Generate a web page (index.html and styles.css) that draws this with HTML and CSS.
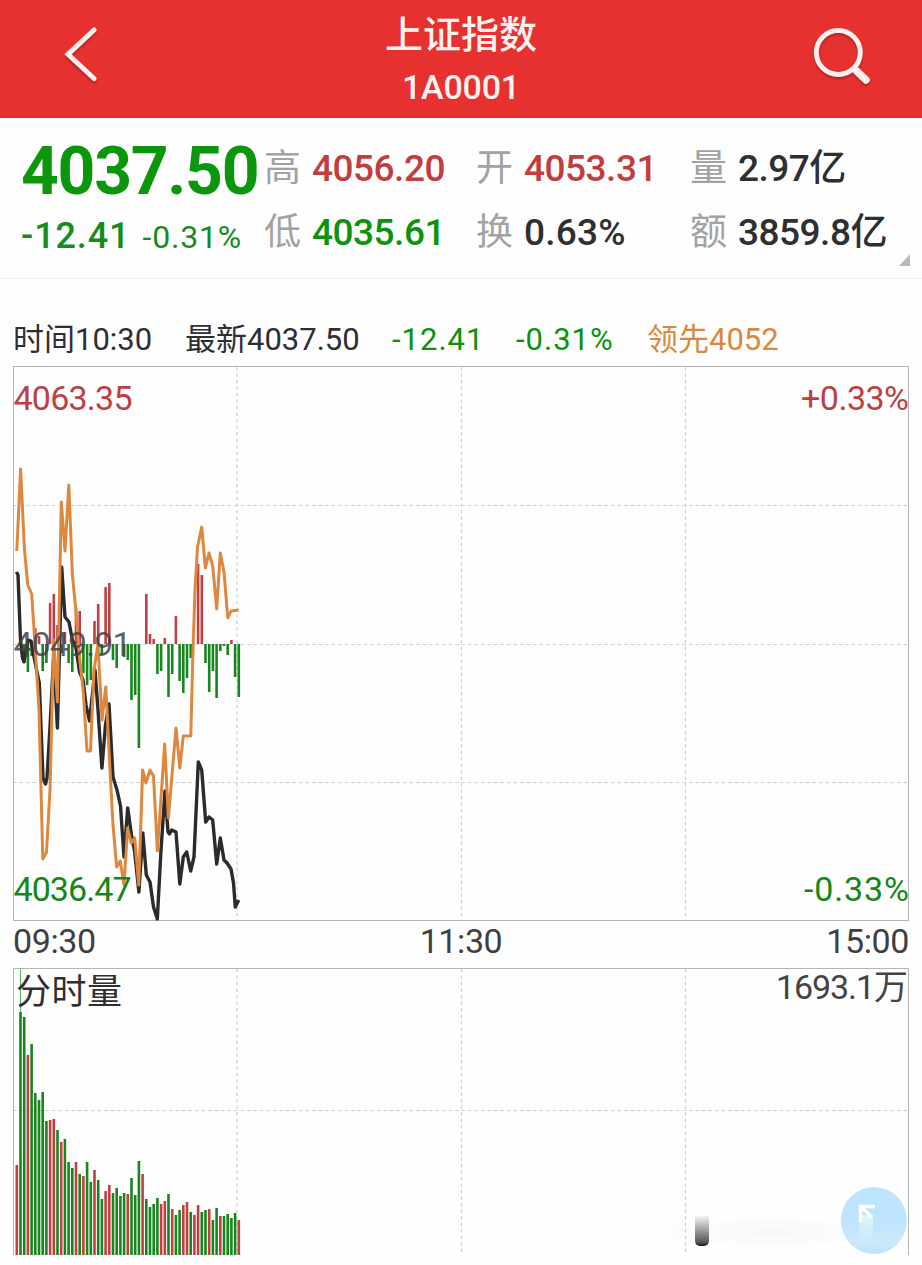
FILE: index.html
```html
<!DOCTYPE html>
<html lang="zh-CN">
<head>
    <meta charset="UTF-8">
    <meta name="viewport" content="width=device-width, initial-scale=1.0">
    <title>上证指数 1A0001</title>
    <link rel="stylesheet" href="styles.css">
</head>
<body>
    <header>
        <svg class="back" viewBox="0 0 40 60" width="40" height="60">
            <path d="M37 5 L11 29.300 L37 53.500"/>
        </svg>
        <div class="title">
            <h1>上证指数</h1>
            <p>1A0001</p>
        </div>
        <svg class="search" viewBox="0 0 64 64" width="64" height="64">
            <circle cx="28.300" cy="26.500" r="22"/>
            <path class="handle" d="M46.500 45 L56 54"/>
        </svg>
    </header>

    <section class="quote">
        <div class="price">
            <div class="last">4037.50</div>
            <div class="change"><b>-12.41</b><span>-0.31%</span></div>
        </div>
        <dl class="stats">
            <div><dt>高</dt><dd class="up">4056.20</dd></div>
            <div><dt>开</dt><dd class="up">4053.31</dd></div>
            <div><dt>量</dt><dd>2.97亿</dd></div>
            <div><dt>低</dt><dd class="down">4035.61</dd></div>
            <div><dt>换</dt><dd class="turnover">0.63%</dd></div>
            <div><dt>额</dt><dd>3859.8亿</dd></div>
        </dl>
        <i class="more"></i>
    </section>

    <div class="info">
        <span>时间10:30</span>
        <span>最新4037.50</span>
        <span class="down diff">-12.41</span>
        <span class="down diff">-0.31%</span>
        <span class="lead">领先4052</span>
    </div>

    <svg class="chart" viewBox="13 366 896 556" width="896" height="556">
        <path class="grid" d="M13 505.5H908 M13 644.5H908 M13 782.5H908 M237 367V921 M461.5 367V921 M685.5 367V921"/>
        <rect class="frame" x="13.5" y="366.5" width="895" height="554"/>
        <g id="strength"></g>
        <polyline class="index-line" points="16.5,572 18,575 20.5,640 22.5,658 24,662 28,640 31,641 35,662 39.3,683 43,778 45.5,784 47,778 50,727 53.7,655 57.4,728 61.7,567 65,617 69,622 72.4,640 76,648 79.5,672 83,680 86,705 89.5,721 95,670 98,710 101.9,768 105.5,725 109,704 113,777 117,790 120.5,806 124,857 127.7,808 131.5,835 134.7,852 138.9,892 142.8,833 146.3,875 150,882 153.5,907 157.3,919 161,850 165,791 168,832 169.5,834 171.7,830 176,832 179.8,884 183.3,857 186.7,852 190.7,871 194,857 198.3,762 201.7,770 205.7,822 209,817 212.7,820 216.7,864 220.3,838 224,860 227,863 231,869 233.5,883 235.3,907 238.7,900"/>
        <polyline class="lead-line" points="16.8,551 20.6,469 24.5,550 27.8,585 31.7,594 35.3,650 39,710 42.8,859 46.5,852 50,790 53.7,640 57.4,702 61.3,502 65,551 68.8,485 72.4,575 76,612 79.8,660 83.3,692 87,751 90.5,751 94,670 98,644 102,720 105.8,687 109.5,760 113,825 116.7,867 120.3,861 124,885 127.6,828 131.3,843 134.7,838 138.8,885 142.6,770 146,783 150,770 153.5,776 157.4,851 161.2,795 164.7,744 168.4,818 172,775 176,728 179.8,768 183.3,736 190.8,736 192.7,660 195,590 197.5,547 201.7,527 205.4,568 209,553 212.7,566 216.7,609 220.3,553 224,572 227.8,618 231,611 238.7,610"/>
        <text class="up" x="13.500" y="410" textLength="119">4063.35</text>
        <text class="middle" x="13.500" y="656" textLength="118">4049.91</text>
        <text class="down" x="13.500" y="901" textLength="118">4036.47</text>
        <text class="up" x="801" y="410" textLength="108">+0.33%</text>
        <text class="down" x="804" y="901" textLength="105">-0.33%</text>
    </svg>

    <div class="times">
        <span>09:30</span>
        <span>11:30</span>
        <span>15:00</span>
    </div>

    <svg class="chart" viewBox="13 968 896 287" width="896" height="287">
        <path class="grid" d="M13 1110.5H908 M237 969V1255 M461.5 969V1255 M685.5 969V1255"/>
        <path class="frame" d="M13.5 1255V968.5H908.5V1255"/>
        <path class="peak" d="M20.5 969V1012"/>
        <g id="volume"></g>
        <text class="name" x="16" y="1004" textLength="106">分时量</text>
        <text x="776" y="999" textLength="132">1693.1万</text>
    </svg>

    <div class="smear"></div>
    <div class="knob"></div>
    <div class="float-btn">
        <svg viewBox="0 0 66 66" width="66" height="66">
            <defs>
                <linearGradient id="fade" x1="0" y1="18" x2="0" y2="56" gradientUnits="userSpaceOnUse">
                    <stop offset="0.3" stop-color="#dff6f2"/>
                    <stop offset="1" stop-color="#dff6f2" stop-opacity="0"/>
                </linearGradient>
            </defs>
            <rect x="18" y="28" width="14" height="28" fill="url(#fade)"/>
            <path class="head" d="M19.500 35V19.500H34M20 20L31 30"/>
        </svg>
    </div>

    <script>
        // one entry per minute, u = red, d = green
        const volume = 'u1165 d1012 d1017 u1055 d1044 d1093 d1100 d1092 d1121 u1120 u1119 d1130 u1142 d1139 d1162 d1168 u1162 d1174 u1176 d1162 d1182 u1170 d1180 d1199 u1191 u1185 d1193 d1188 d1196 d1193 u1194 d1178 d1195 d1161 u1174 d1199 d1207 d1204 d1198 u1204 u1201 d1194 u1209 d1215 d1210 u1205 u1202 d1212 u1215 u1205 d1212 d1210 u1209 d1220 d1208 u1216 d1216 d1214 d1218 d1213 u1220';
        // end of each bar measured from the middle line
        const strength = [0, 0, 663, 672, 656, 628, 636, 671, 663, 603, 594, 625, 653, 632, 663, 672, 608, 611, 673, 685, 680, 621, 604, 655, 587, 583, 660, 668, 0, 657, 660, 700, 695, 748, 0, 594, 634, 639, 674, 671, 638, 697, 674, 616, 681, 693, 678, 658, 0, 564, 575, 663, 692, 671, 698, 651, 646, 655, 640, 677, 697];

        function bar(group, i, from, to, cls) {
            const r = document.createElementNS('http://www.w3.org/2000/svg', 'rect');
            r.setAttribute('x', (15.5 + 3.7 * i).toFixed(1));
            r.setAttribute('y', Math.min(from, to));
            r.setAttribute('width', 2.6);
            r.setAttribute('height', Math.abs(from - to));
            r.setAttribute('class', cls);
            document.getElementById(group).appendChild(r);
        }

        volume.split(' ').forEach((v, i) => bar('volume', i, 1255, +v.slice(1), v[0] === 'u' ? 'bar-up' : 'bar-down'));
        strength.forEach((y, i) => {
            if (y) bar('strength', i, 644, y, y < 644 ? 'bar-up' : 'bar-down');
        });
    </script>
</body>
</html>
```
FILE: styles.css
```css
* {
    box-sizing: border-box;
}
body {
    margin: 0;
    position: relative;
    width: 922px;
    height: 1265px;
    overflow: hidden;
    font-family: Roboto, "Noto Sans CJK SC", sans-serif;
    background-color: #fefefe;
    color: #2e2f31;
}
.up {
    color: #c23d3d;
    fill: #c23d3d;
}
.down {
    color: #0b930b;
    fill: #0b930b;
}
header {
    height: 118px;
    padding: 0 48px 0 57px;
    display: flex;
    justify-content: space-between;
    background-color: #e73030;
    border-bottom: 1px solid #d33035;
    color: #fff3f0;
}
header svg {
    fill: none;
    stroke: #fff0ee;
    stroke-width: 5;
    stroke-linecap: round;
    filter: drop-shadow(0 2px 1px rgba(100, 20, 20, 0.45));
}
.back {
    margin-top: 25px;
}
.search {
    margin-top: 26px;
}
.search .handle {
    stroke-width: 7.5;
}
.title {
    margin-left: 15px;
    text-align: center;
}
.title h1 {
    margin: 13px 0 0;
    font-size: 38px;
    font-weight: 500;
    line-height: 44px;
}
.title p {
    margin: 9px 0 0;
    font-size: 34px;
    font-weight: 500;
    line-height: 42px;
    letter-spacing: -0.2px;
}
.quote {
    position: relative;
    height: 161px;
    padding-left: 21px;
    display: flex;
    border-bottom: 1px solid #efefef;
}
.price {
    width: 243px;
    flex: none;
    white-space: nowrap;
}
.last {
    margin-top: 18px;
    font-size: 66px;
    font-weight: 700;
    line-height: 72px;
    letter-spacing: -1.3px;
    color: #0b970b;
}
.change {
    margin-top: 7px;
    display: flex;
    gap: 12px;
    align-items: baseline;
    line-height: 42px;
    color: #158c1b;
}
.change b {
    font-size: 36px;
    font-weight: 500;
    letter-spacing: 0.9px;
}
.change span {
    font-size: 32px;
    letter-spacing: 0.8px;
}
.stats {
    margin: 19px 0 0;
    display: grid;
    grid-template-columns: 212px 214px 220px;
    grid-template-rows: 64px 64px;
}
.stats div {
    display: flex;
    gap: 11px;
    align-items: center;
    height: 64px;
    white-space: nowrap;
}
.stats dt {
    font-size: 37px;
    width: 37px;
    line-height: 64px;
    color: #a2a2a2;
}
.stats dd {
    margin: 0;
    font-size: 37px;
    font-weight: 500;
    line-height: 64px;
    letter-spacing: -0.5px;
}
.stats .turnover {
    letter-spacing: 0.2px;
}
.more {
    position: absolute;
    right: 12px;
    bottom: 12px;
    border-left: 11px solid transparent;
    border-bottom: 12px solid #b9b9b9;
}
.info {
    height: 87px;
    padding: 39px 0 0 13px;
    display: grid;
    grid-template-columns: 172px 207px 124px 131px 1fr;
    font-size: 31px;
    line-height: 44px;
    white-space: nowrap;
}
.info .diff {
    letter-spacing: 1px;
}
.info .lead {
    color: #dc873b;
}
.chart {
    display: block;
    margin-left: 13px;
}
.chart text {
    font-size: 34px;
    fill: #444446;
}
.chart text.name {
    font-size: 35px;
    fill: #2e2f31;
}
.chart text.middle {
    fill-opacity: 0.85;
}
.chart text.up {
    fill: #bd3f42;
}
.chart text.down {
    fill: #138717;
}
.grid {
    fill: none;
    stroke: #cfcfcf;
    stroke-width: 1.2;
    stroke-dasharray: 3.5 3;
}
.frame {
    fill: none;
    stroke: #b5b5b5;
}
.bar-up {
    fill: #c04044;
}
.bar-down {
    fill: #17871d;
}
.peak {
    stroke: #5cb862;
    stroke-width: 1.2;
}
.index-line, .lead-line {
    fill: none;
    stroke-linejoin: round;
}
.index-line {
    stroke: #2b2b2b;
    stroke-width: 3.4;
}
.lead-line {
    stroke: #dd873f;
    stroke-width: 3;
}
.times {
    height: 46px;
    padding: 0 13px;
    display: flex;
    justify-content: space-between;
    font-size: 34px;
    line-height: 38px;
    letter-spacing: -0.4px;
    color: #3f3f41;
}
/* floating controls over the volume chart */
.smear {
    position: absolute;
    left: 635px;
    top: 1216px;
    width: 272px;
    height: 32px;
    background: radial-gradient(closest-side, rgba(120, 120, 120, 0.05), transparent);
}
.knob {
    position: absolute;
    left: 695px;
    top: 1216px;
    width: 14px;
    height: 30px;
    border-radius: 0 0 5px 5px;
    background: linear-gradient(#f4f4f4, #999 50%, #555 88%, #111);
}
.float-btn {
    position: absolute;
    left: 841px;
    top: 1187px;
    width: 66px;
    height: 67px;
    border-radius: 50%;
    background: linear-gradient(#bee4fe 50%, #cce8fa 80%, #bee4fe);
}
.float-btn svg {
    display: block;
}
.float-btn .head {
    fill: none;
    stroke: #fff;
    stroke-width: 3.5;
}
```
